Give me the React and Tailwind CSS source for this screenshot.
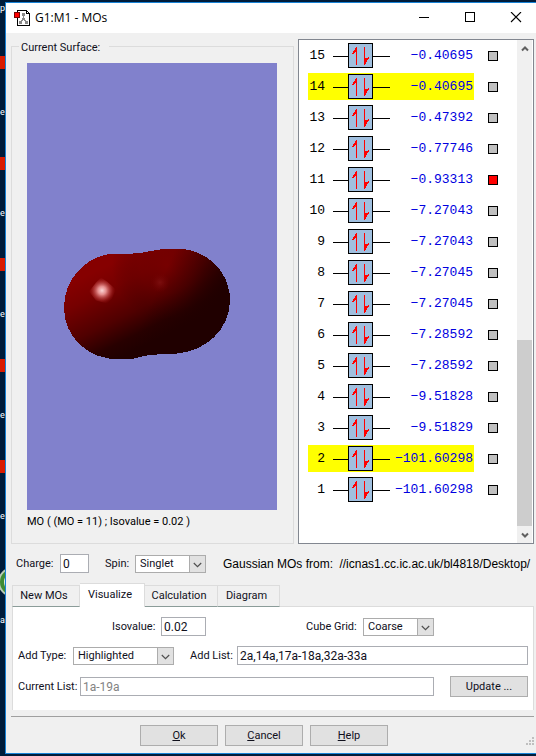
const ORBITALS = [
  { id: 15, energy: '−0.40695' },
  { id: 14, energy: '−0.40695', highlighted: true },
  { id: 13, energy: '−0.47392' },
  { id: 12, energy: '−0.77746' },
  { id: 11, energy: '−0.93313', active: true },
  { id: 10, energy: '−7.27043' },
  { id: 9, energy: '−7.27043' },
  { id: 8, energy: '−7.27045' },
  { id: 7, energy: '−7.27045' },
  { id: 6, energy: '−7.28592' },
  { id: 5, energy: '−7.28592' },
  { id: 4, energy: '−9.51828' },
  { id: 3, energy: '−9.51829' },
  { id: 2, energy: '−101.60298', highlighted: true },
  { id: 1, energy: '−101.60298' },
];

const DESKTOP_LABELS = ['e', 'e', 'e', 'e', 'e'];

const TABS = [
  { name: 'New MOs', width: 'w-[68px]' },
  { name: 'Visualize', width: 'w-[65px]', selected: true },
  { name: 'Calculation', width: 'w-[73px]' },
  { name: 'Diagram', width: 'w-[62px]' },
];

function Desktop() {
  return (
    <aside className="flex w-[5px] shrink-0 flex-col overflow-hidden text-[9px] leading-[12px] text-white" aria-hidden="true">
      <div className="h-[54px]">p</div>
      {DESKTOP_LABELS.map((label, i) => (
        <div key={i} className="h-[101px]">
          <div className="h-[13px] bg-[#d81c00]" />
          <div className="mt-[37px]">{label}</div>
        </div>
      ))}
      <svg className="mt-[6px] h-[30px] w-[5px] shrink-0" viewBox="0 0 5 30">
        <circle cx="13" cy="15" r="14" fill="#3f8b33" stroke="#b9c9b4" strokeWidth="2" />
        <circle cx="14" cy="15" r="10" fill="#e3ebe0" />
      </svg>
      <div className="mt-[17px]">a</div>
    </aside>
  );
}

function AppIcon() {
  return (
    <svg className="h-4 w-4" viewBox="0 0 16 16" shapeRendering="crispEdges" aria-hidden="true">
      <path d="M3.5.5H12.5L15.5 3.5V15.5H3.5Z" fill="#fff" stroke="#000" />
      <path d="M12.5.5V3.5H15.5" fill="none" stroke="#000" />
      <path d="M9.5 5V9M9.5 9L6.5 12.5M9.5 9L12.5 12.5" stroke="#888" strokeWidth="1.5" fill="none" />
      <path d="M8 3h3v3H8ZM8 8h3v2H8ZM5 11h3v3H5ZM11 11h3v3H11Z" fill="#888" />
      <path d="M.5 2.5H5.5V7.5H.5Z" fill="#f00" stroke="#700" />
    </svg>
  );
}

function TitleBar() {
  return (
    <header className="-mr-[3px] flex h-[30px] shrink-0 items-center bg-white pl-2">
      <AppIcon />
      <h1 className="ml-[5px] flex-1 font-['Open_Sans',sans-serif] text-[12px] leading-4 text-black">G1:M1 - MOs</h1>
      <button type="button" aria-label="Minimize" className="flex h-full w-[46px] items-center justify-center">
        <svg className="h-3 w-3" viewBox="0 0 12 12" shapeRendering="crispEdges">
          <path d="M1 5.5H11" stroke="#000" />
        </svg>
      </button>
      <button type="button" aria-label="Maximize" className="flex h-full w-[46px] items-center justify-center">
        <svg className="h-3 w-3" viewBox="0 0 12 12" shapeRendering="crispEdges">
          <path d="M1.5 .5H10.5V9.5H1.5Z" fill="none" stroke="#000" />
        </svg>
      </button>
      <button type="button" aria-label="Close" className="flex h-full w-[46px] items-center justify-center">
        <svg className="h-3 w-3" viewBox="0 0 12 12">
          <path d="M1 0L11 10M11 0L1 10" stroke="#000" strokeWidth="1.1" />
        </svg>
      </button>
    </header>
  );
}

function Surface() {
  const outline =
    'M37 244C37 215 60 190 90 190L106 190C118 190 128 185 148 185C181 185 203 209 203 237C203 266 178 288 150 290C128 291 122 291 111 294C104 296 99 296 93 296C60 296 37 273 37 244Z';
  return (
    <svg className="block h-full min-h-[446px] w-full bg-[#8181cc]" viewBox="0 0 250 446" role="img" aria-label="Molecular orbital surface">
      <defs>
        <linearGradient id="base" gradientUnits="userSpaceOnUse" x1="82" y1="201" x2="121" y2="280">
          <stop offset="0" stopColor="#860000" />
          <stop offset="0.25" stopColor="#760000" />
          <stop offset="0.6" stopColor="#500000" />
          <stop offset="0.85" stopColor="#280000" />
          <stop offset="1" stopColor="#200000" />
        </linearGradient>
        <linearGradient id="shade" gradientUnits="userSpaceOnUse" x1="135" y1="215" x2="190" y2="240">
          <stop offset="0" stopColor="#200000" stopOpacity="0" />
          <stop offset="0.5" stopColor="#200000" stopOpacity="0.4" />
          <stop offset="1" stopColor="#200000" stopOpacity="1" />
        </linearGradient>
        <radialGradient id="right" gradientUnits="userSpaceOnUse" cx="140" cy="202" r="55">
          <stop offset="0" stopColor="#780000" stopOpacity="0.8" />
          <stop offset="0.5" stopColor="#680000" stopOpacity="0.45" />
          <stop offset="1" stopColor="#3a0000" stopOpacity="0" />
        </radialGradient>
        <radialGradient id="shine" gradientUnits="userSpaceOnUse" cx="75" cy="227" r="14">
          <stop offset="0" stopColor="#fbd6d6" />
          <stop offset="0.3" stopColor="#e48c8c" />
          <stop offset="0.65" stopColor="#b83c3c" stopOpacity="0.6" />
          <stop offset="1" stopColor="#8a0000" stopOpacity="0" />
        </radialGradient>
        <radialGradient id="glow" gradientUnits="userSpaceOnUse" cx="133" cy="219" r="10">
          <stop offset="0" stopColor="#801212" stopOpacity="0.8" />
          <stop offset="1" stopColor="#700000" stopOpacity="0" />
        </radialGradient>
      </defs>
      <g shapeRendering="crispEdges">
        <path d={outline} fill="url(#base)" />
        <path d={outline} fill="url(#right)" />
        <path d={outline} fill="url(#shade)" />
      </g>
      <path d="M62 228L69 219L74 214L80 218L89 226L85 235L80 240L69 237Z" fill="url(#shine)" />
      <circle cx="133" cy="219" r="10" fill="url(#glow)" />
    </svg>
  );
}

function SurfacePanel() {
  return (
    <fieldset className="-mt-[3px] flex min-w-0 flex-1 flex-col border border-[#dcdcdc] pr-4 pb-[13px] pl-[15px]">
      <legend className="-ml-2 pt-1 pr-[9px] pl-[2px] leading-4">Current Surface:</legend>
      <div className="mt-[7px] flex-1">
        <Surface />
      </div>
      <p className="mt-1 leading-4 text-black">MO ( (MO = 11) ; Isovalue = 0.02 )</p>
    </fieldset>
  );
}

function ElectronPair() {
  return (
    <svg className="h-[25px] w-[57px] shrink-0" viewBox="0 0 57 25" shapeRendering="crispEdges" aria-hidden="true">
      <path d="M0 13.5H57" stroke="#000" />
      <path d="M15.5.5H39.5V24.5H15.5Z" fill="#a0bfdf" stroke="#000" />
      <path d="M23 4H24V22H23ZM22 5H23V9H22ZM21 7H22V10H21ZM20 8H21V11H20ZM19 10H20V11H19Z" fill="#f00" />
      <path d="M31 4H32V22H31ZM32 15H33V21H32ZM33 15H34V19H33ZM34 15H35V17H34ZM35 14H36V16H35Z" fill="#f00" />
    </svg>
  );
}

function OrbitalRow({ id, energy, highlighted, active }) {
  return (
    <li className="flex h-[31px] items-center">
      <div
        className={`flex h-[27px] w-[166px] items-center font-['Liberation_Mono',monospace] text-[13px] ${
          highlighted ? 'bg-[#ff0]' : ''
        }`}
      >
        <span className="mr-2 w-[17px] shrink-0 text-right text-black">{id}</span>
        <ElectronPair />
        <span className="-ml-1 flex-1 pr-px text-right text-[#0000e0]">{energy}</span>
      </div>
      <input
        type="checkbox"
        defaultChecked={active}
        aria-label={`Orbital ${id}`}
        className="ml-[14px] h-[10px] w-[10px] appearance-none border border-black bg-[#c0c0c0] checked:bg-[#f00]"
      />
    </li>
  );
}

function OrbitalList() {
  return (
    <section className="flex w-[236px] shrink-0 border border-[#828790] bg-white" aria-label="Orbitals">
      <ol className="flex-1 pl-[9px]">
        {ORBITALS.map((orbital) => (
          <OrbitalRow key={orbital.id} {...orbital} />
        ))}
      </ol>
      <div className="mr-px flex w-[15px] flex-col bg-[#f0f0f0]">
        <button type="button" aria-label="Scroll up" className="flex h-[17px] items-center justify-center">
          <svg className="h-2 w-2" viewBox="0 0 8 8">
            <path d="M1 5.5L4 2.5L7 5.5" fill="none" stroke="#606060" strokeWidth="2" />
          </svg>
        </button>
        <div className="flex-[283]" />
        <div className="flex-[186] bg-[#cdcdcd]" />
        <button type="button" aria-label="Scroll down" className="flex h-[17px] items-center justify-center">
          <svg className="h-2 w-2" viewBox="0 0 8 8">
            <path d="M1 2.5L4 5.5L7 2.5" fill="none" stroke="#606060" strokeWidth="2" />
          </svg>
        </button>
      </div>
    </section>
  );
}

function Dropdown({ id, value, className }) {
  return (
    <div className={`relative h-[18px] shrink-0 ${className}`}>
      <select
        id={id}
        defaultValue={value}
        className="block h-full w-full appearance-none border border-[#acacac] bg-white pl-1 leading-[14px]"
      >
        <option>{value}</option>
      </select>
      <span className="pointer-events-none absolute inset-y-0 right-0 flex w-[17px] items-center justify-center border border-[#acacac] bg-[#e1e1e1]">
        <svg className="mt-[2px] h-[6px] w-[9px]" viewBox="0 0 9 6">
          <path d="M.8 1L4.5 4.7L8.2 1" fill="none" stroke="#505050" strokeWidth="1.2" />
        </svg>
      </span>
    </div>
  );
}

function TextBox({ id, value, className, ...rest }) {
  return (
    <input
      id={id}
      type="text"
      defaultValue={value}
      className={`h-[19px] min-w-0 border border-[#abadb3] bg-white px-[2px] text-[12px] disabled:text-[#838383] ${className}`}
      {...rest}
    />
  );
}

function PushButton({ children }) {
  return (
    <button type="button" className="h-[21px] w-[78px] shrink-0 border border-[#adadad] bg-[#e1e1e1] leading-[18px]">
      {children}
    </button>
  );
}

function StatusRow() {
  return (
    <div className="mt-[10px] flex h-[19px] items-center pl-[5px] whitespace-nowrap">
      <label htmlFor="charge" className="w-11 shrink-0">Charge:</label>
      <TextBox id="charge" value="0" className="w-[29px] shrink-0" />
      <label htmlFor="spin" className="ml-4 w-[30px] shrink-0">Spin:</label>
      <Dropdown id="spin" value="Singlet" className="w-[71px]" />
      <p className="ml-[17px] font-['Liberation_Sans',sans-serif] text-[12px] text-black">
        Gaussian MOs from: <span className="ml-[3px]">//icnas1.cc.ic.ac.uk/bl4818/Desktop/</span>
      </p>
    </div>
  );
}

function Tabs() {
  return (
    <div className="mt-[10px] flex h-6 items-end pl-px" role="tablist">
      {TABS.map((tab) => (
        <button
          key={tab.name}
          type="button"
          role="tab"
          aria-selected={!!tab.selected}
          className={`border-t border-r border-[#dcdcdc] pr-1 leading-[18px] first:border-l ${tab.width} ${
            tab.selected
              ? 'h-6 bg-white pb-[2px]'
              : 'h-[22px] border-b border-b-[#8b9c99] bg-[#f0f0f0]'
          }`}
        >
          {tab.name}
        </button>
      ))}
      <div className="flex-1 border-b border-[#dcdcdc]" />
    </div>
  );
}

function VisualizePanel() {
  return (
    <div className="ml-px flex flex-col border-x border-[#dcdcdc] bg-white px-[5px] pt-[10px] pb-[14px]" role="tabpanel">
      <div className="flex h-[19px] items-center">
        <label htmlFor="isovalue" className="ml-[94px] w-[49px] shrink-0">Isovalue:</label>
        <TextBox id="isovalue" value="0.02" className="w-[45px] shrink-0" />
        <label htmlFor="grid" className="ml-[100px] w-[57px] shrink-0">Cube Grid:</label>
        <Dropdown id="grid" value="Coarse" className="w-[71px]" />
      </div>
      <div className="mt-[10px] flex h-[19px] items-center">
        <label htmlFor="add-type" className="w-[55px] shrink-0">Add Type:</label>
        <Dropdown id="add-type" value="Highlighted" className="w-[101px]" />
        <label htmlFor="add-list" className="ml-4 w-[47px] shrink-0">Add List:</label>
        <TextBox id="add-list" value="2a,14a,17a-18a,32a-33a" className="flex-1" />
      </div>
      <div className="mt-3 flex h-[19px] items-center">
        <label htmlFor="current-list" className="w-[62px] shrink-0 whitespace-nowrap">Current List:</label>
        <TextBox id="current-list" value="1a-19a" className="mr-4 flex-1" disabled />
        <PushButton>Update ...</PushButton>
      </div>
    </div>
  );
}

export default function App() {
  return (
    <div className="flex min-h-screen bg-[#001c3a] py-[2px] font-['Roboto','Liberation_Sans',sans-serif] text-[11px] leading-4 text-[#10101c]">
      <Desktop />
      <main className="flex min-w-0 flex-1 flex-col overflow-hidden border-y border-l border-[#1883d7] bg-[#f0f0f0]">
        <TitleBar />
        <div className="flex flex-1 flex-col pt-[6px] pr-[2px] pl-[5px]">
          <div className="flex flex-1 gap-1">
            <SurfacePanel />
            <OrbitalList />
          </div>
          <StatusRow />
          <Tabs />
          <VisualizePanel />
          <footer className="mt-[6px] flex h-[37px] items-start justify-center gap-[7px] border-t border-[#a0a0a0] pt-2 pr-[17px]">
            <PushButton><u>O</u>k</PushButton>
            <PushButton><u>C</u>ancel</PushButton>
            <PushButton><u>H</u>elp</PushButton>
          </footer>
          <svg className="-mt-4 mb-2 h-2 w-2 shrink-0 self-end" viewBox="0 0 8 8" aria-hidden="true">
            <path d="M6 0h2v2H6ZM3 3h2v2H3ZM6 3h2v2H6ZM0 6h2v2H0ZM3 6h2v2H3ZM6 6h2v2H6Z" fill="#bfbfbf" />
          </svg>
        </div>
      </main>
    </div>
  );
}
